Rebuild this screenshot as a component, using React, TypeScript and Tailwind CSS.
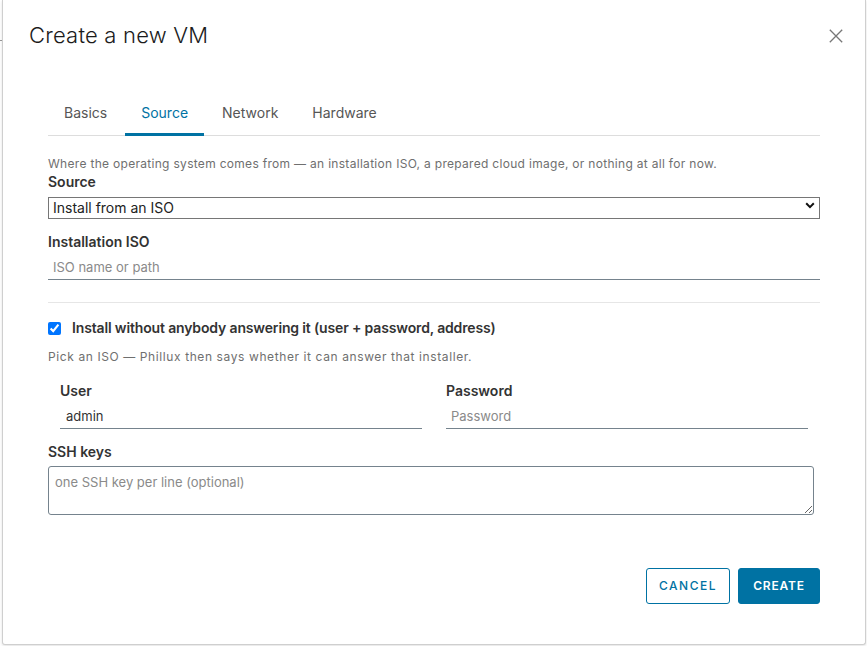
import { useState } from "react";

const tabs = ["Basics", "Source", "Network", "Hardware"];

function CloseIcon() {
  return (
    <svg width="14" height="14" viewBox="0 0 14 14" fill="none">
      <path d="M0.8 0.8L13.2 13.2M13.2 0.8L0.8 13.2" stroke="#777" strokeWidth="1.3" />
    </svg>
  );
}

function Chevron() {
  return (
    <svg width="10" height="7" viewBox="0 0 10 7" fill="none">
      <path d="M1.2 1.3L5 5.1L8.8 1.3" stroke="#111" strokeWidth="2" />
    </svg>
  );
}

export default function App() {
  const [active, setActive] = useState("Source");
  const [unattended, setUnattended] = useState(true);

  return (
    <div
      className="flex h-[646px] w-[867px] overflow-hidden bg-white text-[#333]"
      style={{ fontFamily: "Inter, 'Noto Sans', sans-serif" }}
    >
      {/* page behind the dialog */}
      <div className="w-[2px] shrink-0">
        <div className="mt-[40px] h-px bg-[#999]" />
      </div>

      <div className="flex h-[645px] w-[864px] shrink-0 flex-col rounded-b-[3px] border-x border-b border-[#cfcfcf] bg-white shadow-[0_1px_3px_rgba(0,0,0,0.12)]">
        {/* header */}
        <div className="flex items-start justify-between pl-[26px] pr-[22px] pt-[19px]">
          <h1 className="text-[22px] font-light leading-[32px] tracking-[0.2px] text-[#1b1b1b]">
            Create a new VM
          </h1>
          <button className="mt-[10px] p-0">
            <CloseIcon />
          </button>
        </div>

        <div className="flex flex-col pl-[45px] pr-[45px]">
          {/* tabs */}
          <div className="mt-[38px] flex gap-[2px] border-b border-[#dddddd]">
            {tabs.map((t) => (
              <button
                key={t}
                onClick={() => setActive(t)}
                className={
                  t === active
                    ? "-mb-px flex h-[47px] items-center border-b-[3px] border-[#0072a3] px-4 pt-[3px] text-[14px] text-[#0072a3]"
                    : "-mb-px flex h-[47px] items-center border-b-[3px] border-transparent px-4 pt-[3px] text-[14px] text-[#565656]"
                }
              >
                {t}
              </button>
            ))}
          </div>

          <p className="mt-[20px] text-[12px] leading-4 tracking-[0.3px] text-[#6f6f6f]">
            Where the operating system comes from — an installation ISO, a prepared cloud image, or nothing at
            all for now.
          </p>

          <label className="mt-0 text-[14px] font-semibold leading-5 text-[#333]">Source</label>
          <div className="relative mt-[3px]">
            <select className="h-[22px] w-full appearance-none border border-[#767676] bg-white px-[4px] text-[14px] leading-5 text-[#222] outline-none">
              <option>Install from an ISO</option>
              <option>Use a cloud image</option>
              <option>Nothing for now</option>
            </select>
            <span className="pointer-events-none absolute right-[5px] top-[7px]">
              <Chevron />
            </span>
          </div>

          <label className="mt-[13px] text-[14px] font-semibold leading-5 text-[#333]">Installation ISO</label>
          <input
            placeholder="ISO name or path"
            className="mt-[6px] h-[22px] border-b border-[#75838d] px-[5px] pb-[3px] text-[13px] text-[#333] outline-none placeholder:text-[#8a8a8a]"
          />

          <div className="mt-[22px] h-px bg-[#e6e6e6]" />

          <label className="mt-[15px] flex items-center gap-[11px] text-[14px] font-semibold leading-5 tracking-[-0.15px] text-[#333]">
            <input
              type="checkbox"
              checked={unattended}
              onChange={(e) => setUnattended(e.target.checked)}
              className="m-0 h-[13px] w-[13px] accent-[#0075ff]"
            />
            Install without anybody answering it (user + password, address)
          </label>

          <p className="mt-[11px] text-[12px] leading-4 tracking-[0.6px] text-[#6f6f6f]">
            Pick an ISO — Phillux then says whether it can answer that installer.
          </p>

          <div className="mt-[16px] grid grid-cols-2 gap-x-6 px-3">
            <div className="flex flex-col">
              <label className="text-[14px] font-semibold leading-5 text-[#333]">User</label>
              <input
                defaultValue="admin"
                className="mt-[6px] h-[22px] border-b border-[#75838d] px-[6px] pb-[3px] text-[13px] text-[#333] outline-none"
              />
            </div>
            <div className="flex flex-col">
              <label className="text-[14px] font-semibold leading-5 text-[#333]">Password</label>
              <input
                type="password"
                placeholder="Password"
                className="mt-[6px] h-[22px] border-b border-[#75838d] px-[5px] pb-[3px] text-[13px] text-[#333] outline-none placeholder:text-[#8a8a8a]"
              />
            </div>
          </div>

          <label className="mt-[13px] text-[14px] font-semibold leading-5 text-[#333]">SSH keys</label>
          <textarea
            placeholder="one SSH key per line (optional)"
            className="mt-[4px] h-[49px] w-[766px] rounded-[3px] border border-[#75838d] px-[6px] pb-[4px] pt-[7px] text-[13px] leading-4 text-[#333] outline-none placeholder:text-[#8a8a8a]"
          />

          {/* footer */}
          <div className="mt-[53px] flex justify-end gap-2">
            <button className="h-[36px] w-[84px] rounded-[3px] border border-[#0072a3] bg-white text-[12px] font-medium tracking-[1.5px] text-[#0072a3]">
              CANCEL
            </button>
            <button className="h-[36px] w-[82px] rounded-[3px] border border-[#0072a3] bg-[#0072a3] text-[12px] font-semibold tracking-[0.8px] text-white">
              CREATE
            </button>
          </div>
        </div>
      </div>
    </div>
  );
}
